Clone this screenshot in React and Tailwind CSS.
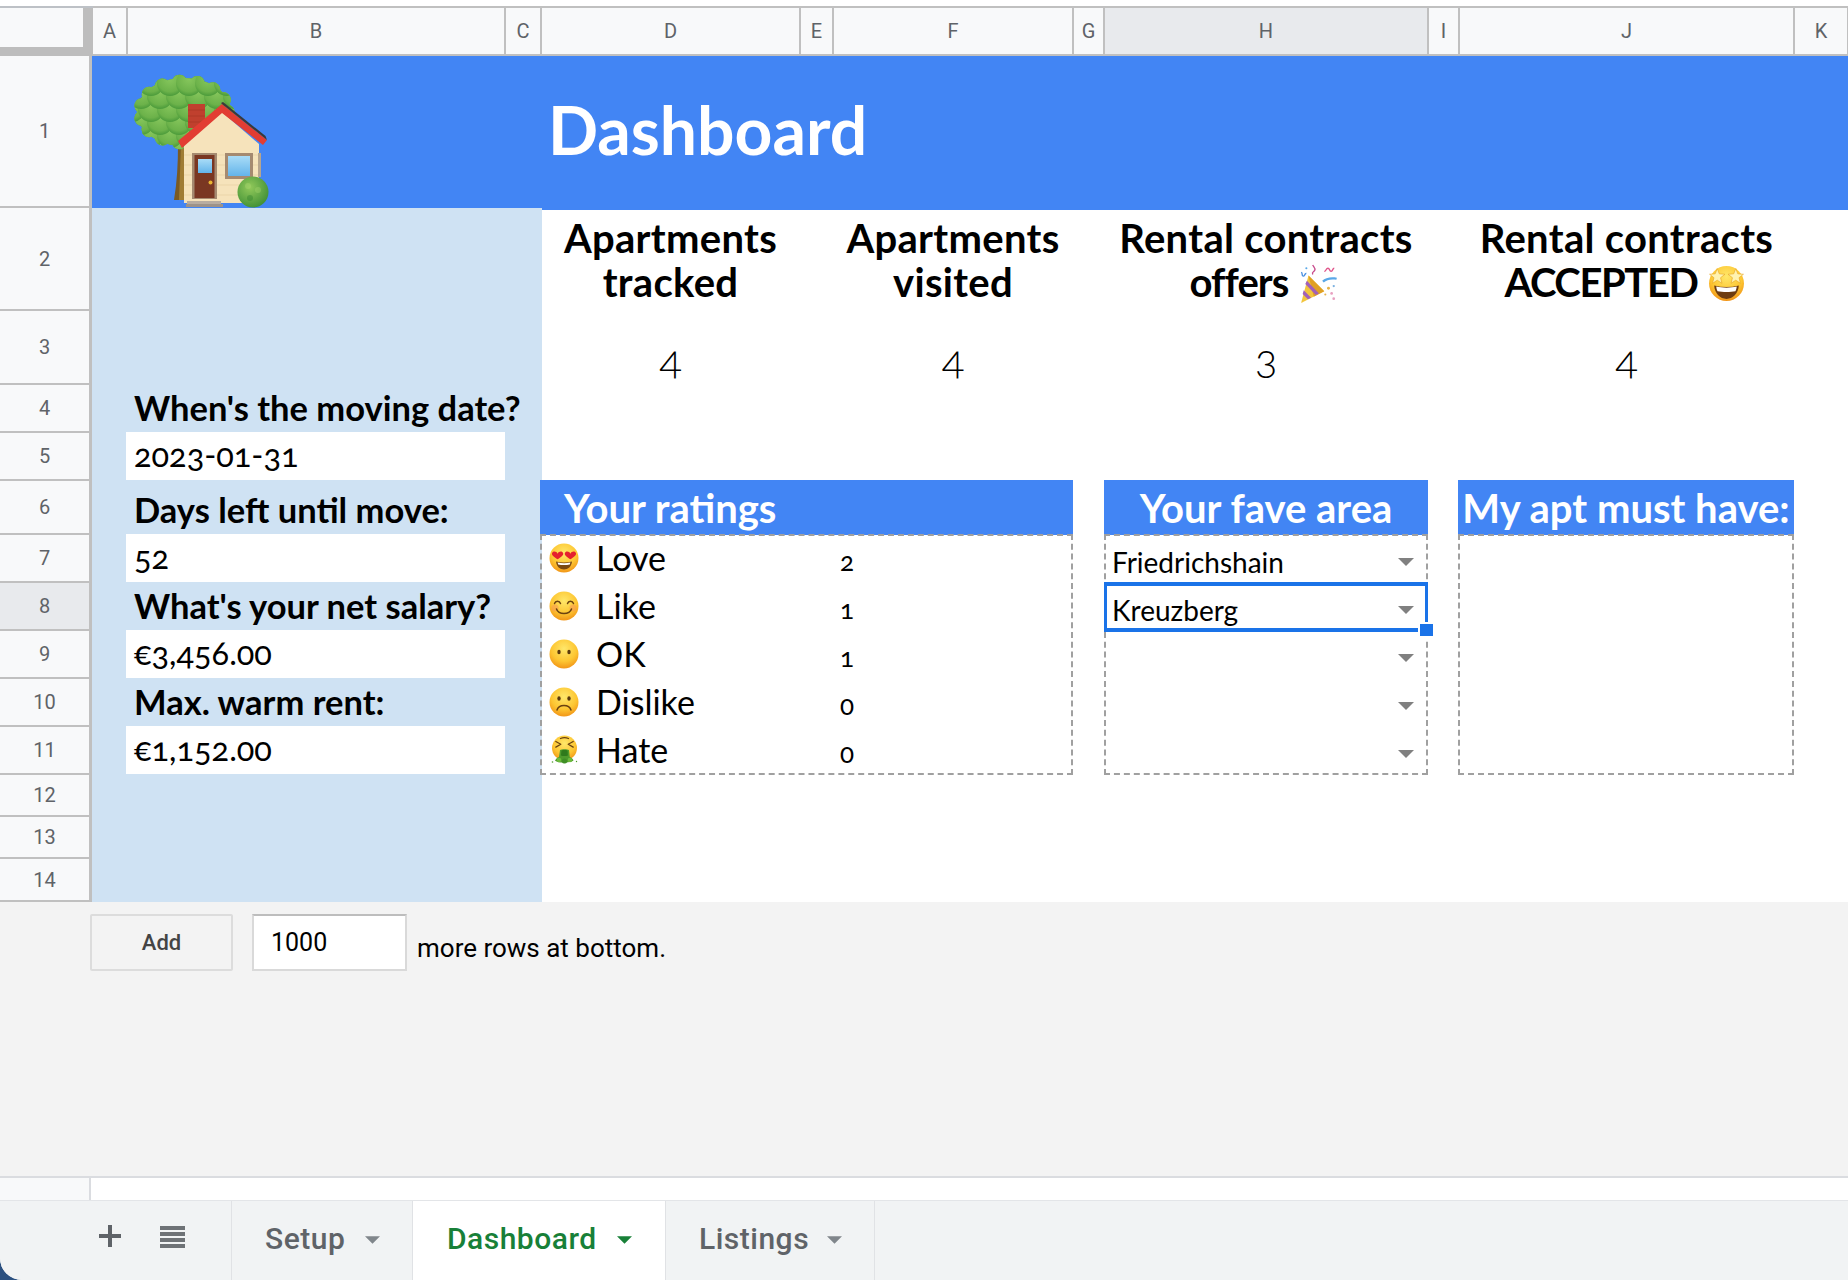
import React from "react";

const columns = [
  { label: "A", col: "col-start-2" },
  { label: "B", col: "col-start-3" },
  { label: "C", col: "col-start-4" },
  { label: "D", col: "col-start-5" },
  { label: "E", col: "col-start-6" },
  { label: "F", col: "col-start-7" },
  { label: "G", col: "col-start-8" },
  { label: "H", col: "col-start-9", active: true },
  { label: "I", col: "col-start-10" },
  { label: "J", col: "col-start-11" },
  { label: "K", col: "col-start-12" },
];

const rows = [
  { n: 1, row: "row-start-2" },
  { n: 2, row: "row-start-3" },
  { n: 3, row: "row-start-4" },
  { n: 4, row: "row-start-5" },
  { n: 5, row: "row-start-6" },
  { n: 6, row: "row-start-7" },
  { n: 7, row: "row-start-8" },
  { n: 8, row: "row-start-9", active: true },
  { n: 9, row: "row-start-10" },
  { n: 10, row: "row-start-11" },
  { n: 11, row: "row-start-12" },
  { n: 12, row: "row-start-13" },
  { n: 13, row: "row-start-14" },
  { n: 14, row: "row-start-15" },
];

const raleway = "font-['Lato','Noto_Sans',sans-serif] oldstyle-nums";

function FaceBase({ id, children }) {
  return (
    <svg viewBox="0 0 30 30" className="w-[30px] h-[30px] shrink-0">
      <defs>
        <radialGradient id={id} cx="50%" cy="32%" r="72%">
          <stop offset="0%" stopColor="#ffe76a" />
          <stop offset="60%" stopColor="#fdc632" />
          <stop offset="100%" stopColor="#f08f14" />
        </radialGradient>
      </defs>
      <circle cx="15" cy="15" r="14.5" fill={`url(#${id})`} />
      {children}
    </svg>
  );
}

function Heart({ x, y }) {
  return (
    <path
      transform={`translate(${x} ${y})`}
      d="M0 3.2C-.8.6-4.8-.1-5.6 2.6-6.1 5 -2.4 7 0 8.6 2.4 7 6.1 5 5.6 2.6 4.8-.1.8.6 0 3.2Z"
      fill="#e5202e"
    />
  );
}

function LoveFace() {
  return (
    <FaceBase id="love">
      <Heart x={8.6} y={7.6} />
      <Heart x={21.4} y={7.6} />
      <path d="M7 18.5c5 1.4 11 1.4 16 0-.4 5-4 8-8 8s-7.600-3-8-8Z" fill="#7b4a12" />
      <path d="M8.600 19.600c4 .9 9 .9 12.800 0l-.6 1.800c-3.600.7-8 .7-11.600 0Z" fill="#fff" />
    </FaceBase>
  );
}

function LikeFace() {
  return (
    <FaceBase id="like">
      <circle cx="6" cy="17" r="3.5" fill="#f7945a" opacity=".5" />
      <circle cx="24" cy="17" r="3.5" fill="#f7945a" opacity=".5" />
      <path d="M5.500 12.500c1-3 5-3 6 0M18.500 12.500c1-3 5-3 6 0" fill="none" stroke="#6b4210" strokeWidth="1.500" strokeLinecap="round" />
      <path d="M7.500 18c2 6 13 6 15 0" fill="none" stroke="#6b4210" strokeWidth="1.500" strokeLinecap="round" />
    </FaceBase>
  );
}

function OkFace() {
  return (
    <FaceBase id="ok">
      <ellipse cx="10" cy="13" rx="1.700" ry="2.200" fill="#5b3a0e" />
      <ellipse cx="20" cy="13" rx="1.700" ry="2.200" fill="#5b3a0e" />
    </FaceBase>
  );
}

function DislikeFace() {
  return (
    <FaceBase id="dislike">
      <ellipse cx="10" cy="11.500" rx="1.700" ry="2.200" fill="#5b3a0e" />
      <ellipse cx="20" cy="11.500" rx="1.700" ry="2.200" fill="#5b3a0e" />
      <path d="M8 23c2-6 12-6 14 0" fill="none" stroke="#6b4210" strokeWidth="1.500" strokeLinecap="round" />
    </FaceBase>
  );
}

function HateFace() {
  return (
    <svg viewBox="0 0 30 30" className="w-[30px] h-[30px] shrink-0">
      <defs>
        <radialGradient id="hate" cx="50%" cy="32%" r="72%">
          <stop offset="0%" stopColor="#ffe76a" />
          <stop offset="60%" stopColor="#fdc632" />
          <stop offset="100%" stopColor="#f08f14" />
        </radialGradient>
      </defs>
      <circle cx="15.500" cy="13" r="12.500" fill="url(#hate)" />
      <path d="M6.800 6.500l5 2.800-5 2.800M24.200 6.500l-5 2.800 5 2.800M11.500 3.500c2-.8 6-.8 8 0" fill="none" stroke="#6b4210" strokeWidth="1.300" strokeLinecap="round" strokeLinejoin="round" />
      <path d="M11 15c2-1 7-1 9 0l.8 7c2 .8 3.200 2 3.700 3.500-3 2.500-15 3-18.500 .3.800-2 2.500-3.300 4-3.800Z" fill="#4e9a2c" />
      <path d="M12.500 15.500c2-.6 4-.6 6 0l.4 5c-2 .8-5 .8-7 0Z" fill="#2f7a1c" />
      <circle cx="10" cy="25" r="2.300" fill="#6cbb3c" />
      <circle cx="15.500" cy="26" r="2.600" fill="#3f8f25" />
      <circle cx="21" cy="25" r="2.300" fill="#6cbb3c" />
      <circle cx="3.500" cy="27" r=".8" fill="#4e9a2c" />
      <circle cx="27.500" cy="26.500" r=".7" fill="#4e9a2c" />
    </svg>
  );
}

function PartyPopper() {
  return (
    <svg viewBox="0 0 38 38" className="inline-block w-[40px] h-[40px] align-[-7px]">
      <path d="M9 11 24 26 2 37Z" fill="#f2c53d" />
      <path d="M9 11 24 26 14 31Z" fill="#e0a024" />
      <path d="M7.500 16 19 28l-3 1.500L6 19ZM4.500 25l7 7-3 1.500-5-5Z" fill="#a160b8" />
      <path d="M2 8c2 .5 0 3 2 3.500s1-3 3-2.500" fill="none" stroke="#4a90e0" strokeWidth="1.300" />
      <path d="M13 1c1 2 3 3 2 5s-3 1-2 4" fill="none" stroke="#c84a8c" strokeWidth="1.300" />
      <path d="M24 7c2 0 1.500-3 3.500-3s1 3 3 3 1-3 3-3" fill="none" stroke="#e0558a" strokeWidth="1.300" />
      <path d="M22 16c3-3 8-4 14-3l-.5 2c-5-1-9 0-12 2.500Z" fill="#5aa8e8" />
      <circle cx="7" cy="4" r="1" fill="#5aa8e8" />
      <circle cx="28" cy="23" r="1.400" fill="#e6b34a" />
      <circle cx="33" cy="21" r="1.100" fill="#7ab0e0" />
      <circle cx="31" cy="28" r="1.300" fill="#e8a0c0" />
      <circle cx="25" cy="29" r="1" fill="#e6b34a" />
      <circle cx="33" cy="33" r="1.300" fill="#e8a0c0" />
    </svg>
  );
}

function StarFace() {
  const star = "M0-7.500 2-2.400 7.500-2 3.200 1.400 4.600 6.800 0 3.800-4.600 6.800-3.200 1.400-7.500-2-2-2.400Z";
  return (
    <svg viewBox="0 0 36 36" className="inline-block w-[37px] h-[37px] align-[-5px]">
      <defs>
        <radialGradient id="star" cx="50%" cy="30%" r="75%">
          <stop offset="0%" stopColor="#ffe76a" />
          <stop offset="60%" stopColor="#fdc632" />
          <stop offset="100%" stopColor="#ee8a12" />
        </radialGradient>
      </defs>
      <circle cx="18" cy="18" r="17" fill="url(#star)" />
      <path transform="translate(9 11)" d={star} fill="#fff3b0" stroke="#e7a321" strokeWidth=".6" />
      <path transform="translate(27 11)" d={star} fill="#fff3b0" stroke="#e7a321" strokeWidth=".6" />
      <path d="M6 20c8 2 16 2 24 0-.5 8-6 13-12 13S6.500 28 6 20Z" fill="#6e3c10" />
      <path d="M8 21c6 1.400 14 1.400 20 0-.3 2-.7 3.500-1.300 4.500-5 1-12.400 1-17.400 0C8.700 24.500 8.200 23 8 21Z" fill="#fff" />
    </svg>
  );
}

// leaf scales of the tree top, bottom rows first so the upper ones lie over them
const leaves = [];
for (let y = 88; y >= 16; y -= 13) {
  const odd = Math.round(y / 13) % 2 === 1;
  for (let x = 12; x <= 116; x += 19) {
    leaves.push([x + (odd ? 9 : 0), y]);
  }
}

// bumps along the rim of the tree top
const rim = [];
for (let a = 0; a < 360; a += 24) {
  const t = (a * Math.PI) / 180;
  rim.push([64 + 43 * Math.cos(t), 52 + 30 * Math.sin(t)]);
}

function HouseEmoji() {
  return (
    <svg viewBox="0 0 170 160" className="w-[170px] h-[160px] shrink-0">
      <defs>
        <radialGradient id="scale" cx="50%" cy="35%" r="65%">
          <stop offset="0%" stopColor="#86c65c" />
          <stop offset="75%" stopColor="#6cb24a" />
          <stop offset="100%" stopColor="#4a9a3a" />
        </radialGradient>
        <radialGradient id="bush" cx="40%" cy="35%" r="70%">
          <stop offset="0%" stopColor="#92c95a" />
          <stop offset="100%" stopColor="#3f8f35" />
        </radialGradient>
        <linearGradient id="glass" x1="0" y1="0" x2="0" y2="1">
          <stop offset="0%" stopColor="#a9dcf7" />
          <stop offset="100%" stopColor="#63b4ea" />
        </linearGradient>
        <clipPath id="canopyClip">
          <ellipse cx="64" cy="52" rx="47" ry="34" />
          {rim.map(([x, y], i) => (
            <circle key={i} cx={x} cy={y} r="7.500" />
          ))}
        </clipPath>
      </defs>
      <path d="M58 84h9v56H54c3-18 4-36 4-56Z" fill="#7a5a24" />
      <path d="M61 84h6v56h-8Z" fill="#a07c34" />
      <g clipPath="url(#canopyClip)">
        <rect x="10" y="10" width="110" height="85" fill="#4a9a3a" />
        {leaves.map(([x, y], i) => (
          <circle key={i} cx={x} cy={y} r="13" fill="url(#scale)" />
        ))}
      </g>
      <rect x="68" y="44" width="17" height="24" fill="#c0402e" />
      <path d="M68 50h17M68 56h17M68 62h17" stroke="#a33324" strokeWidth=".6" />
      <path d="M64 85 102 52 139 84V143H64Z" fill="#f6e3bb" />
      <path d="M64 95h75M64 105h75M64 115h75M64 125h75M64 135h75" stroke="#e6cf9f" strokeWidth=".6" />
      <path d="M102 44 147 80 143 85 102 53 62 88 58 81Z" fill="#e23d33" />
      <path d="M102 44 147 80 145.500 76 103 42 101 43Z" fill="#3a3a3a" />
      <rect x="138" y="93" width="3" height="24" fill="#b7a58e" />
      <rect x="72" y="93" width="25" height="46" fill="#a58a70" />
      <rect x="74.500" y="95" width="20" height="43" fill="#7a3722" />
      <rect x="78" y="99" width="14" height="14" fill="url(#glass)" />
      <circle cx="90.500" cy="122.500" r="2" fill="#eab531" />
      <rect x="105" y="93" width="28" height="26" fill="#a58a70" />
      <rect x="108" y="96" width="22" height="20" fill="url(#glass)" />
      <path d="M67 141h34v3H67Z" fill="#b8ada0" />
      <path d="M66 144h37v3H66Z" fill="#9e9388" />
      <circle cx="133" cy="132" r="15.500" fill="url(#bush)" />
      <circle cx="128" cy="126" r="3" fill="#a4d46c" opacity=".5" />
      <circle cx="138" cy="130" r="3" fill="#a4d46c" opacity=".4" />
      <circle cx="130" cy="138" r="3" fill="#2f7f2e" opacity=".4" />
    </svg>
  );
}

function Caret({ className }) {
  return (
    <svg viewBox="0 0 16 8" className={className}>
      <polygon points="0,0 16,0 8,8" fill="currentColor" />
    </svg>
  );
}

function Label({ row, children }) {
  return (
    <div className={`${row} col-start-3 pl-[7px] pb-[6px] flex items-end text-[34.5px] leading-[38px] font-bold text-black ${raleway} whitespace-nowrap`}>
      {children}
    </div>
  );
}

function Value({ row, children }) {
  return (
    <div className={`${row} col-start-3 -mt-[1px] mb-[1px] -ml-[1px] bg-white pl-[8px] pb-[2px] flex items-center text-[32.5px] leading-[38px] text-black ${raleway}`}>
      {children}
    </div>
  );
}

function Rating({ row, face, label, count }) {
  return (
    <>
      <div className={`${row} col-start-5 pl-[8px] flex items-center gap-[17px] text-[34px] leading-[38px] text-black ${raleway} -translate-y-[1px]`}>
        {face}
        <span>{label}</span>
      </div>
      <div className={`${row} col-start-7 pl-[7px] flex items-center text-[26px] text-black translate-y-[2px] ${raleway}`}>{count}</div>
    </>
  );
}

function AreaCell({ row, value }) {
  return (
    <div className={`${row} col-start-9 pl-[8px] pr-[14px] pt-[6px] flex items-center justify-between text-[28px] text-black ${raleway}`}>
      <span>{value}</span>
      <Caret className="w-[16px] h-[8px] text-[#808080]" />
    </div>
  );
}

function Tab({ label, active }) {
  return (
    <div
      className={`h-full flex items-center border-r border-[#e0e2e5] ${
        active
          ? "w-[253px] pl-[34px] gap-[20px] bg-white text-[#188038]"
          : label === "Setup"
            ? "w-[181px] pl-[33px] gap-[20px] text-[#5f6368]"
            : "w-[209px] pl-[33px] gap-[18px] text-[#5f6368]"
      }`}
    >
      <span className="-translate-y-[2px] text-[30px] font-medium tracking-[0.5px] font-['Roboto',sans-serif]">{label}</span>
      <Caret className={`w-[15px] h-[8px] -translate-y-[1px] ${active ? "text-[#188038]" : "text-[#80868b]"}`} />
    </div>
  );
}

export default function App() {
  return (
    <div className="w-[1848px] h-[1280px] bg-[#2b5080] overflow-hidden">
      <div className="w-full h-full bg-white rounded-bl-[22px] overflow-hidden flex flex-col font-['Roboto',sans-serif]">
        <div className="h-[6px] shrink-0 bg-white" />

        {/* GRID */}
        <div className="shrink-0 grid grid-cols-[92px_35px_378px_36px_259px_33px_240px_31px_324px_31px_335px_54px] grid-rows-[50px_152px_103px_74px_48px_48px_54px_48px_48px_48px_48px_48px_42px_42px_43px] bg-white">
          {/* column headers */}
          <div className="row-start-1 col-start-1 -mr-[1px] bg-[#bdbdbd] border-t-2 border-[#bdc1c6] pb-[9px] pr-[10px]">
            <div className="w-full h-full bg-[#f8f9fa]" />
          </div>
          {columns.map((c) => (
            <div
              key={c.label}
              className={`row-start-1 ${c.col} ml-[1px] -mr-[1px] flex items-center justify-center border-t-2 border-b-2 border-r-2 border-[#c0c0c0] text-[20px] text-[#5f6368] ${
                c.active ? "bg-[#e8eaed]" : "bg-[#f8f9fa]"
              }`}
            >
              {c.label}
            </div>
          ))}

          {/* row headers */}
          {rows.map((r) => (
            <div
              key={r.n}
              className={`${r.row} col-start-1 flex items-center justify-center border-b-2 border-r-[3px] border-[#c0c0c0] text-[20px] text-[#5f6368] ${
                r.active ? "bg-[#e8eaed]" : "bg-[#f8f9fa]"
              }`}
            >
              {r.n}
            </div>
          ))}

          {/* blue title band */}
          <div className="row-start-2 col-start-2 col-span-11 -mb-[2px] bg-[#4285f4] flex items-start pl-[28px] pt-[4px]">
            <HouseEmoji />
            <h1 className={`ml-[258px] mt-[33px] text-[66px] leading-[74px] font-bold text-white ${raleway}`}>Dashboard</h1>
          </div>

          {/* side panel */}
          <div className="row-start-3 row-span-13 col-start-2 col-span-3 -mr-[1px] bg-[#cfe2f3]" />
          <Label row="row-start-5">When's the moving date?</Label>
          <Value row="row-start-6">2023-01-31</Value>
          <Label row="row-start-7">Days left until move:</Label>
          <Value row="row-start-8">52</Value>
          <Label row="row-start-9">What's your net salary?</Label>
          <Value row="row-start-10">€3,456.00</Value>
          <Label row="row-start-11">Max. warm rent:</Label>
          <Value row="row-start-12">€1,152.00</Value>

          {/* stat headers */}
          {[
            { col: "col-start-5", title: "Apartments", sub: "tracked", value: 4 },
            { col: "col-start-7", title: "Apartments", sub: "visited", value: 4 },
            { col: "col-start-9", title: "Rental contracts", sub: "offers", subClass: "tracking-[-0.9px]", icon: <PartyPopper />, value: 3 },
            { col: "col-start-11", title: "Rental contracts", sub: "ACCEPTED", subClass: "tracking-[-1.4px]", icon: <StarFace />, value: 4 },
          ].map((s) => (
            <React.Fragment key={s.col}>
              <div className={`row-start-3 ${s.col} z-10 pt-[9px] text-center text-[40px] leading-[43.500px] tracking-[0.3px] font-bold text-black whitespace-nowrap ${raleway}`}>
                {s.title}
                <br />
                <span className={s.icon ? "inline-block -translate-x-[2px]" : ""}>
                  <span className={s.subClass}>{s.sub}</span>
                  {s.icon ? " " : ""}
                  {s.icon}
                </span>
              </div>
              <div className={`row-start-4 ${s.col} pt-[25px] text-center text-[42px] leading-[44px] font-light text-black ${raleway}`}>{s.value}</div>
            </React.Fragment>
          ))}

          {/* section bands */}
          <div className={`row-start-7 col-start-5 col-span-3 -ml-[1px] -mt-[1px] bg-[#4285f4] pl-[24px] flex items-center text-[40px] font-bold text-white ${raleway}`}>Your ratings</div>
          <div className={`row-start-7 col-start-9 -mt-[1px] bg-[#4285f4] flex items-center justify-center text-[40px] font-bold text-white ${raleway}`}>Your fave area</div>
          <div className={`row-start-7 col-start-11 -ml-[1px] -mt-[1px] bg-[#4285f4] flex items-center justify-center text-[40px] font-bold text-white whitespace-nowrap ${raleway}`}>My apt must have:</div>

          {/* ratings */}
          <Rating row="row-start-8" face={<LoveFace />} label="Love" count="2" />
          <Rating row="row-start-9" face={<LikeFace />} label="Like" count="1" />
          <Rating row="row-start-10" face={<OkFace />} label="OK" count="1" />
          <Rating row="row-start-11" face={<DislikeFace />} label="Dislike" count="0" />
          <Rating row="row-start-12" face={<HateFace />} label="Hate" count="0" />
          <div className="row-start-8 row-span-5 col-start-5 col-span-3 -ml-[1px] -mt-[1px] border-2 border-dashed border-[#a0a0a0]" />

          {/* fave area */}
          <AreaCell row="row-start-8" value="Friedrichshain" />
          <AreaCell row="row-start-9" value="Kreuzberg" />
          <AreaCell row="row-start-10" />
          <AreaCell row="row-start-11" />
          <AreaCell row="row-start-12" />
          <div className="row-start-8 row-span-5 col-start-9 -mt-[1px] border-2 border-dashed border-[#a0a0a0]" />
          <div className="row-start-9 col-start-9 relative -mt-[1px] -mb-[1px] border-x-[3px] border-y-4 border-[#1a73e8]">
            <div className="absolute -right-[10px] -bottom-[10px] w-[17px] h-[16px] bg-[#1a73e8] border-2 border-white" />
          </div>

          {/* must have */}
          <div className="row-start-8 row-span-5 col-start-11 -ml-[1px] -mt-[1px] border-2 border-dashed border-[#a0a0a0]" />
        </div>

        {/* ADD ROWS */}
        <div className="flex-1 bg-[#f3f3f3] border-b-2 border-[#dadce0] pl-[90px] pt-[12px]">
          <div className="flex items-start">
            <button className="w-[143px] h-[57px] rounded-[2px] border-2 border-[#dcdcdc] bg-[#f3f3f3] text-[22px] font-medium text-[#444]">Add</button>
            <div className="ml-[19px] w-[155px] h-[57px] border-2 border-[#d9d9d9] border-t-[#bdbdbd] bg-white pl-[17px] flex items-center text-[25px] text-black">1000</div>
            <span className="ml-[10px] mt-[18px] text-[26px] leading-[32px] text-black font-['Roboto',sans-serif]">more rows at bottom.</span>
          </div>
        </div>

        <div className="h-[22px] shrink-0 flex">
          <div className="w-[91px] bg-[#f8f9fa] border-r-2 border-[#dadce0]" />
          <div className="flex-1 bg-white" />
        </div>

        {/* SHEET TABS */}
        <div className="h-[80px] shrink-0 bg-[#f1f3f4] border-t border-[#e3e5e8] flex items-center">
          <div className="w-[232px] h-full border-r border-[#e0e2e5] flex items-center pl-[99px] gap-[39px]">
            <svg viewBox="0 0 22 22" className="w-[22px] h-[22px] -translate-y-[5px]">
              <path d="M9 0h4v9h9v4h-9v9H9v-9H0V9h9Z" fill="#5f6368" />
            </svg>
            <svg viewBox="0 0 25 22" className="w-[25px] h-[22px] -translate-y-[4px]">
              <path d="M0 0h25v4H0ZM0 6h25v4H0ZM0 12h25v4H0ZM0 18h25v4H0Z" fill="#6e7276" />
            </svg>
          </div>
          <Tab label="Setup" />
          <Tab label="Dashboard" active />
          <Tab label="Listings" />
        </div>
      </div>
    </div>
  );
}
